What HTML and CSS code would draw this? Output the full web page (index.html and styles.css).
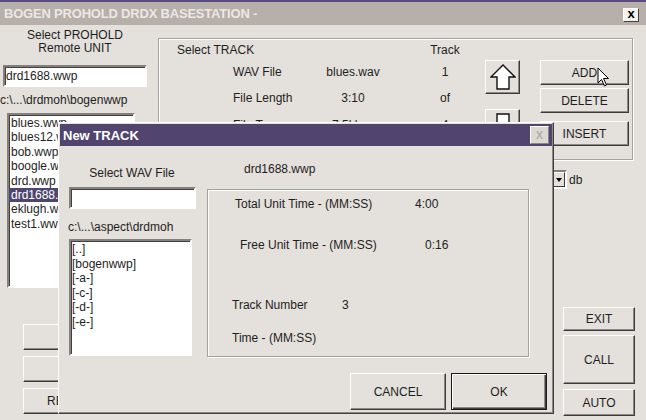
FILE: index.html
```html
<!DOCTYPE html>
<html lang="en">

<head>
    <meta charset="UTF-8">
    <meta name="viewport" content="width=device-width, initial-scale=1.0">
    <title>BOGEN PROHOLD DRDX BASESTATION</title>
    <link rel="stylesheet" href="styles.css">
</head>

<body>
    <div class="window">
        <div class="titlebar">
            <span class="title">BOGEN PROHOLD DRDX BASESTATION -</span>
            <div class="close">x</div>
        </div>

        <div class="client">
            <!-- remote unit picker -->
            <div class="unit-col">
                <div class="unit-label">Select PROHOLD<br>Remote UNIT</div>
                <div class="field unit-field">drd1688.wwp</div>
                <div class="path">c:\...\drdmoh\bogenwwp</div>
                <ul class="listbox unit-list">
                    <li>blues.wwp</li>
                    <li>blues12.wwp</li>
                    <li>bob.wwp</li>
                    <li>boogle.wwp</li>
                    <li>drd.wwp</li>
                    <li class="selected">drd1688.wwp</li>
                    <li>eklugh.wwp</li>
                    <li>test1.wwp</li>
                </ul>
                <div class="unit-buttons">
                    <button class="btn"></button>
                    <button class="btn"></button>
                    <button class="btn">RECORD</button>
                </div>
            </div>

            <!-- track list of the selected unit -->
            <div class="track-col">
                <div class="group track-group">
                    <div class="track-fields">
                        <span class="heading">Select TRACK</span>
                        <span class="num">Track</span>

                        <span class="lbl">WAV File</span>
                        <span class="val">blues.wav</span>
                        <span class="num">1</span>

                        <span class="lbl">File Length</span>
                        <span class="val">3:10</span>
                        <span class="num">of</span>

                        <span class="lbl">File Type</span>
                        <span class="val">7.5kbps</span>
                        <span class="num">4</span>
                    </div>
                    <div class="arrows">
                        <button class="btn arrow">
                            <svg width="26" height="26" viewBox="0 0 26 26">
                                <path d="M13 1 L25 13 L19 13 L19 25 L7 25 L7 13 L1 13 Z" fill="#fff" stroke="#111" stroke-width="1.4" stroke-linejoin="miter"/>
                            </svg>
                        </button>
                        <button class="btn arrow">
                            <svg width="26" height="26" viewBox="0 0 26 26">
                                <path d="M13 25 L25 13 L19 13 L19 1 L7 1 L7 13 L1 13 Z" fill="#fff" stroke="#111" stroke-width="1.4" stroke-linejoin="miter"/>
                            </svg>
                        </button>
                    </div>
                    <div class="track-buttons">
                        <button class="btn">ADD</button>
                        <button class="btn">DELETE</button>
                        <button class="btn insert">INSERT</button>
                    </div>
                </div>

                <div class="db-row">
                    <div class="field combo">
                        <span class="combo-arrow"><span class="tri"></span></span>
                    </div>
                    <span class="db">db</span>
                </div>

                <div class="call-buttons">
                    <button class="btn exit">EXIT</button>
                    <button class="btn call">CALL</button>
                    <button class="btn auto">AUTO</button>
                </div>
            </div>
        </div>

        <svg class="cursor" width="13" height="21" viewBox="0 0 13 21">
            <path d="M1 1 L1 16 L4.5 12.5 L7.5 19 L9.5 18 L6.5 11.5 L11.5 11.5 Z" fill="#fff" stroke="#000" stroke-width="1"/>
        </svg>
    </div>

    <!-- modal: add a new track -->
    <div class="dialog">
        <div class="dlg-title">
            <span>New TRACK</span>
            <div class="dlg-close">x</div>
        </div>
        <div class="dlg-body">
            <div class="dlg-left">
                <div class="wav-label">Select WAV File</div>
                <div class="field wav-field"></div>
                <div class="dlg-path">c:\...\aspect\drdmoh</div>
                <ul class="listbox dir-list">
                    <li>[..]</li>
                    <li>[bogenwwp]</li>
                    <li>[-a-]</li>
                    <li>[-c-]</li>
                    <li>[-d-]</li>
                    <li>[-e-]</li>
                </ul>
            </div>
            <div class="dlg-right">
                <div class="unit-name">drd1688.wwp</div>
                <div class="group time-group">
                    <div class="time-row row-total">
                        <span class="t-lbl">Total Unit Time - (MM:SS)</span>
                        <span>4:00</span>
                    </div>
                    <div class="time-row row-free">
                        <span class="t-lbl">Free Unit Time - (MM:SS)</span>
                        <span>0:16</span>
                    </div>
                    <div class="time-row row-track">
                        <span class="t-lbl">Track Number</span>
                        <span>3</span>
                    </div>
                    <div class="time-row row-time">
                        <span class="t-lbl">Time - (MM:SS)</span>
                    </div>
                </div>
            </div>
        </div>
        <div class="dlg-footer">
            <button class="btn dlg-btn">CANCEL</button>
            <button class="btn dlg-btn default">OK</button>
        </div>
    </div>
</body>

</html>
```

FILE: styles.css
```css
* {
    margin: 0;
    padding: 0;
    box-sizing: border-box;
}

body {
    width: 646px;
    height: 420px;
    overflow: hidden;
    position: relative;
    background-color: #e4e0db;
    font-family: "Liberation Sans", Arial, sans-serif;
    font-size: 12px;
    color: #1e1e1e;
}

.window {
    height: 420px;
    border-top: 2px solid #5a4b7d;
    position: relative;
}

/* inactive caption */
.titlebar {
    height: 23px;
    background-color: #b6afaa;
    display: flex;
    align-items: center;
    justify-content: space-between;
    padding: 0 7px 0 4px;
}

.title {
    font-weight: bold;
    font-size: 13px;
    color: #ece8e4;
    letter-spacing: -0.2px;
}

.close {
    width: 16px;
    height: 14px;
    margin-top: 2px;
    background-color: #f4f2ef;
    border: 1px solid;
    border-color: #fff #404040 #404040 #fff;
    font-weight: bold;
    font-size: 13px;
    line-height: 10px;
    text-align: center;
    color: #000;
}

/* 3d controls */
.btn {
    font: inherit;
    color: #1e1e1e;
    background-color: #e4e0db;
    border: 1px solid;
    border-color: #fff #3c3c3c #3c3c3c #fff;
    box-shadow: inset -1px -1px #8c8782;
    display: flex;
    align-items: center;
    justify-content: center;
}

.field,
.listbox {
    background-color: #fff;
    border: 2px solid;
    border-color: #85807b #fff #fff #85807b;
    box-shadow: inset 1px 1px #404040;
}

.listbox {
    list-style: none;
    overflow: hidden;
}

.group {
    border: 1px solid #a6a19c;
    box-shadow: inset 1px 1px #fff, 1px 1px #fff;
}

.client {
    display: flex;
}

.unit-col {
    width: 150px;
    flex-shrink: 0;
    padding-top: 4px;
}

.unit-label {
    text-align: center;
    line-height: 13px;
}

.unit-field {
    margin: 10px 0 0 3px;
    width: 144px;
    height: 22px;
    line-height: 18px;
    padding: 0 1px;
}

.path {
    margin-top: 6px;
    line-height: 14px;
}

.unit-list {
    margin: 6px 0 0 7px;
    width: 128px;
    height: 175px;
    padding-top: 1px;
    line-height: 14.4px;
}

.unit-list li {
    padding-left: 2px;
}

.unit-list .selected {
    background-color: #4f4571;
    color: #fff;
}

.unit-buttons {
    margin: 36px 0 0 23px;
    width: 100px;
    display: flex;
    flex-direction: column;
    gap: 6px;
}

.unit-buttons .btn {
    height: 26px;
}

.track-col {
    padding: 13px 0 0 8px;
}

.track-group {
    display: flex;
    align-items: flex-start;
    width: 475px;
    height: 122px;
    padding: 1px 3px 0 18px;
}

.track-fields {
    display: grid;
    grid-template-columns: 56px 80px 80px 32px 40px;
    grid-template-rows: 20px 24px 27px 27px;
    align-items: center;
    line-height: 14px;
}

.track-fields .heading {
    grid-column: 1 / 4;
}

.track-fields .lbl {
    grid-column: 2;
}

.track-fields .val {
    grid-column: 3;
    text-align: center;
}

.track-fields .num {
    grid-column: 5;
    text-align: center;
}

.arrows {
    margin: 20px 0 0 20px;
    display: flex;
    flex-direction: column;
    gap: 15px;
}

.arrow {
    width: 35px;
    height: 34px;
}

.track-buttons {
    margin: 20px 0 0 20px;
    width: 89px;
    display: flex;
    flex-direction: column;
    gap: 3px;
}

.track-buttons .btn {
    height: 25px;
}

.track-buttons .insert {
    margin-top: 5px;
}

.db-row {
    display: flex;
    align-items: center;
    margin-top: 10px;
    padding-left: 307px;
}

.combo {
    width: 102px;
    height: 19px;
    display: flex;
    justify-content: flex-end;
}

.combo-arrow {
    width: 13px;
    height: 15px;
    background-color: #e4e0db;
    border: 1px solid;
    border-color: #fff #3c3c3c #3c3c3c #fff;
    display: flex;
    align-items: center;
    justify-content: center;
}

.tri {
    width: 0;
    height: 0;
    border-left: 3.5px solid transparent;
    border-right: 3.5px solid transparent;
    border-top: 4px solid #000;
}

.db {
    margin-left: 2px;
}

.call-buttons {
    margin: 118px 0 0 405px;
    width: 72px;
    display: flex;
    flex-direction: column;
}

.call-buttons .exit {
    height: 24px;
}

.call-buttons .call {
    height: 49px;
    margin-top: 4px;
}

.call-buttons .auto {
    height: 27px;
    margin-top: 5px;
}

.cursor {
    position: absolute;
    left: 597px;
    top: 65px;
}

/* New TRACK dialog */
.dialog {
    position: absolute;
    left: 58px;
    top: 122px;
    width: 496px;
    height: 292px;
    background-color: #e4e0db;
    border: 1px solid;
    border-color: #fff #404040 #404040 #fff;
    box-shadow: inset -1px -1px #8c8782;
    padding: 1px;
}

.dlg-title {
    height: 22px;
    background-color: #514570;
    color: #fff;
    font-weight: bold;
    font-size: 13px;
    display: flex;
    align-items: center;
    justify-content: space-between;
    padding: 0 3px 0 3px;
}

.dlg-close {
    width: 19px;
    height: 18px;
    background-color: #dcd8d3;
    border: 1px solid;
    border-color: #fff #8c8782 #8c8782 #fff;
    color: #aaa6a2;
    font-weight: normal;
    font-size: 14px;
    line-height: 14px;
    text-align: center;
}

.dlg-body {
    display: flex;
    padding-left: 8px;
}

.dlg-left {
    width: 128px;
    flex-shrink: 0;
}

.wav-label {
    margin-top: 20px;
    text-align: center;
    line-height: 14px;
}

.wav-field {
    margin: 7px 0 0 1px;
    width: 127px;
    height: 22px;
}

.dlg-path {
    margin-top: 11px;
    line-height: 14px;
}

.dir-list {
    margin: 5px 0 0 1px;
    width: 123px;
    height: 117px;
    padding-top: 1px;
    line-height: 14.5px;
}

.dir-list li {
    padding-left: 1px;
}

.dlg-right {
    margin-left: 11px;
    width: 322px;
}

.unit-name {
    margin-top: 16px;
    padding-left: 37px;
    line-height: 14px;
}

.time-group {
    margin-top: 13px;
    height: 168px;
    padding-top: 7px;
}

.time-row {
    display: flex;
    line-height: 14px;
}

.row-total {
    padding-left: 27px;
}

.row-total .t-lbl {
    width: 180px;
}

.row-free {
    margin-top: 27px;
    padding-left: 32px;
}

.row-free .t-lbl {
    width: 185px;
}

.row-track {
    margin-top: 46px;
    padding-left: 24px;
}

.row-track .t-lbl {
    width: 110px;
}

.row-time {
    margin-top: 19px;
    padding-left: 24px;
}

.dlg-footer {
    display: flex;
    justify-content: flex-end;
    gap: 5px;
    margin-top: 16px;
    padding-right: 5px;
}

.dlg-btn {
    width: 96px;
    height: 37px;
}

.default {
    border: 1px solid #1a1a1a;
    box-shadow: inset 1px 1px #fff, inset -1px -1px #404040, inset -2px -2px #8c8782;
}
```
